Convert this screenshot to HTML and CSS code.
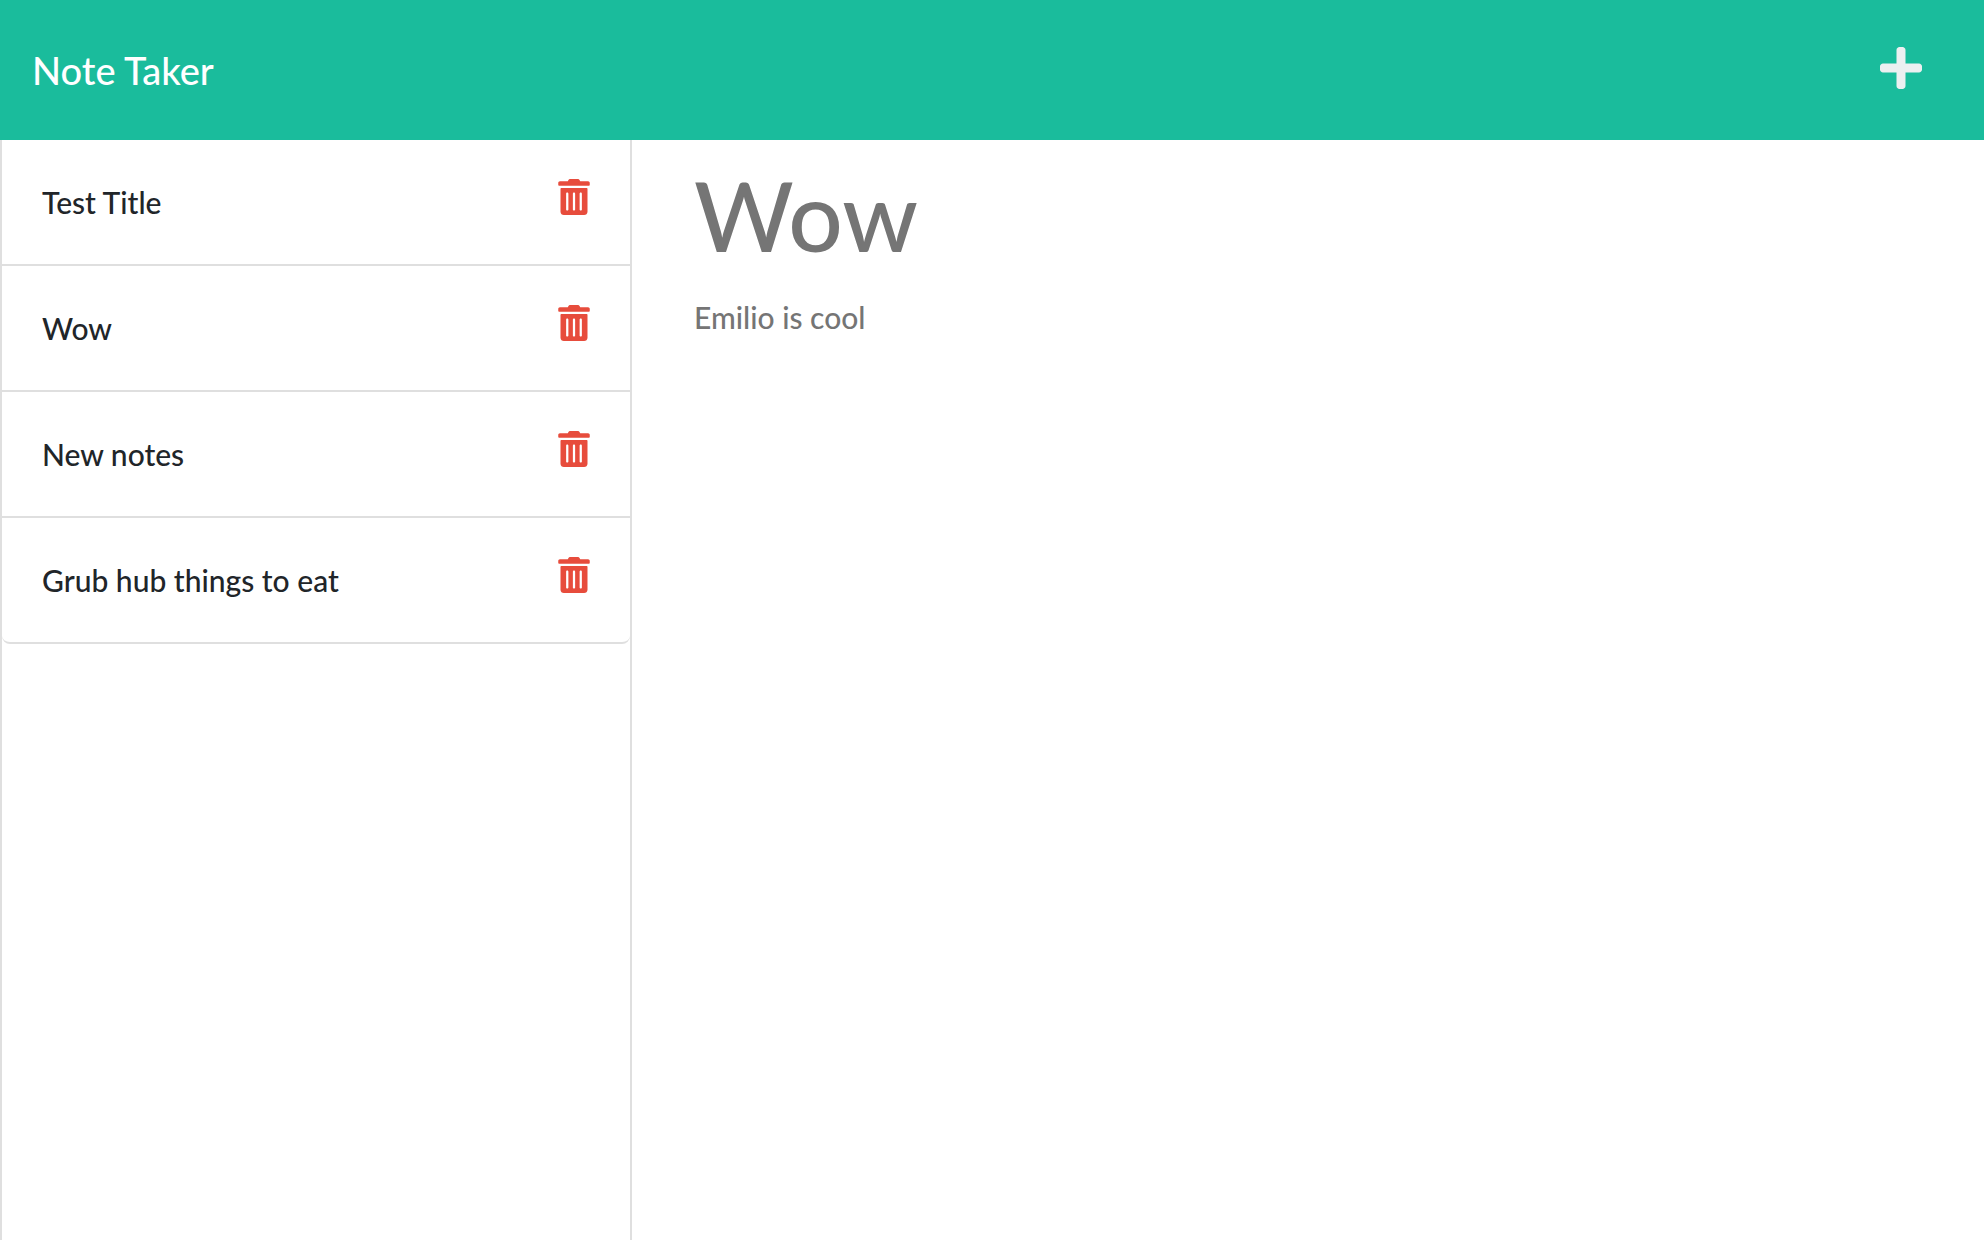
FILE: index.html
```html
<!DOCTYPE html>
<html lang="en">
<head>
  <meta charset="utf-8">
  <meta name="viewport" content="width=device-width, initial-scale=1">
  <title>Note Taker</title>
  <link rel="stylesheet" href="styles.css">
</head>
<body>
  <svg class="sprite" aria-hidden="true">
    <symbol id="trash" viewBox="0 0 448 512">
      <path d="M0 84V56c0-13.3 10.7-24 24-24h112l9.4-18.7c4-8.2 12.3-13.3 21.4-13.3h114.3c9.1 0 17.4 5.1 21.5 13.3L312 32h112c13.3 0 24 10.7 24 24v28c0 6.600-5.400 12-12 12H12C5.400 96 0 90.600 0 84zm416 56v324c0 26.500-21.500 48-48 48H80c-26.500 0-48-21.500-48-48V140c0-6.600 5.400-12 12-12h360c6.600 0 12 5.400 12 12zm-272 68c0-8.800-7.200-16-16-16s-16 7.200-16 16v224c0 8.800 7.200 16 16 16s16-7.200 16-16V208zm96 0c0-8.800-7.200-16-16-16s-16 7.200-16 16v224c0 8.800 7.200 16 16 16s16-7.200 16-16V208zm96 0c0-8.800-7.200-16-16-16s-16 7.200-16 16v224c0 8.800 7.200 16 16 16s16-7.200 16-16V208z"/>
    </symbol>
  </svg>

  <header class="navbar">
    <a class="navbar-brand" href="#">Note Taker</a>
    <button class="icon-button new-note" type="button" aria-label="New note">
      <svg class="icon-plus" viewBox="0 0 448 512" aria-hidden="true">
        <path d="M416 208H272V64c0-17.670-14.330-32-32-32h-32c-17.670 0-32 14.330-32 32v144H32c-17.670 0-32 14.330-32 32v32c0 17.670 14.330 32 32 32h144v144c0 17.670 14.330 32 32 32h32c17.670 0 32-14.330 32-32V304h144c17.670 0 32-14.330 32-32v-32c0-17.670-14.330-32-32-32z"/>
      </svg>
    </button>
  </header>

  <main class="layout">
    <nav class="sidebar" aria-label="Notes">
      <ul class="note-list">
        <li class="note-item">
          <a class="note-link" href="#">Test Title</a>
          <button class="icon-button" type="button" aria-label="Delete Test Title"><svg class="icon-trash" aria-hidden="true"><use href="#trash"/></svg></button>
        </li>
        <li class="note-item">
          <a class="note-link" href="#">Wow</a>
          <button class="icon-button" type="button" aria-label="Delete Wow"><svg class="icon-trash" aria-hidden="true"><use href="#trash"/></svg></button>
        </li>
        <li class="note-item">
          <a class="note-link" href="#">New notes</a>
          <button class="icon-button" type="button" aria-label="Delete New notes"><svg class="icon-trash" aria-hidden="true"><use href="#trash"/></svg></button>
        </li>
        <li class="note-item">
          <a class="note-link" href="#">Grub hub things to eat</a>
          <button class="icon-button" type="button" aria-label="Delete Grub hub things to eat"><svg class="icon-trash" aria-hidden="true"><use href="#trash"/></svg></button>
        </li>
      </ul>
    </nav>

    <section class="editor">
      <input class="note-title" type="text" value="Wow" aria-label="Note title" readonly>
      <textarea class="note-text" aria-label="Note text" readonly>Emilio is cool</textarea>
    </section>
  </main>
</body>
</html>
```
FILE: styles.css
```css
* {
  box-sizing: border-box;
}

body {
  display: flex;
  flex-direction: column;
  min-height: 100vh;
  margin: 0;
  background: #fff;
  color: #212529;
  font-family: Lato, sans-serif;
  font-size: 30px;
  font-weight: 500;
  line-height: 46px;
}

.sprite {
  display: none;
}

.icon-button {
  display: block;
  padding: 0;
  border: 0;
  background: none;
  cursor: pointer;
}

.icon-button svg {
  display: block;
  fill: currentColor;
}

.navbar {
  display: flex;
  align-items: flex-start;
  justify-content: space-between;
  height: 140px;
  padding: 42px 62px 0 32px;
  background: #1abc9c;
}

.navbar-brand {
  color: #fff;
  font-size: 38px;
  line-height: 56px;
  text-decoration: none;
}

.new-note {
  padding-top: 2px;
  color: #ecf0f1;
}

.icon-plus {
  width: 42px;
  height: 48px;
}

.layout {
  display: grid;
  flex: 1;
  grid-template-columns: 1fr 2fr;
  column-gap: 62px;
  padding-right: 26px;
}

.sidebar {
  border: solid #dfdfdf;
  border-width: 0 2px;
}

.note-list {
  margin: 0;
  padding: 0;
  border-bottom: 2px solid #dfdfdf;
  border-radius: 0 0 8px 8px;
  list-style: none;
}

.note-item {
  display: flex;
  align-items: flex-start;
  justify-content: space-between;
  padding: 39px 40px;
}

.note-item + .note-item {
  border-top: 2px solid #dfdfdf;
}

.note-link {
  color: inherit;
  text-decoration: none;
}

.icon-trash {
  width: 32px;
  height: 36px;
  color: #e74c3c;
}

.editor {
  display: flex;
  flex-direction: column;
  gap: 20px;
  padding-top: 14px;
}

.note-title,
.note-text {
  width: 100%;
  padding: 0;
  border: 0;
  outline: 0;
  background: none;
  color: #757575;
  font: inherit;
}

.note-title {
  height: 120px;
  font-size: 96px;
}

.note-text {
  flex: 1;
  resize: none;
}
```
